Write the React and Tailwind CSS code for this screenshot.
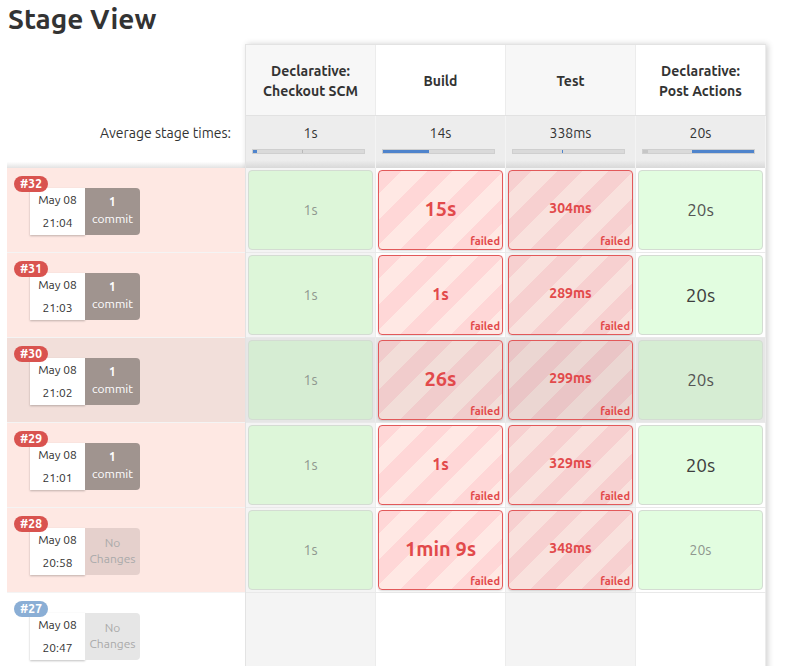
import React from "react";

const rows = [
  {
    id: 32, date: "May 08", time: "21:04", commits: "1", state: "failed",
    cells: [
      { t: "1s", ok: true, size: "small" },
      { t: "15s", ok: false, size: "big" },
      { t: "304ms", ok: false, size: "small" },
      { t: "20s", ok: true, size: "large" },
    ],
  },
  {
    id: 31, date: "May 08", time: "21:03", commits: "1", state: "failed",
    cells: [
      { t: "1s", ok: true, size: "small" },
      { t: "1s", ok: false, size: "mid" },
      { t: "289ms", ok: false, size: "small" },
      { t: "20s", ok: true, size: "xlarge" },
    ],
  },
  {
    id: 30, date: "May 08", time: "21:02", commits: "1", state: "hover",
    cells: [
      { t: "1s", ok: true, size: "small" },
      { t: "26s", ok: false, size: "big" },
      { t: "299ms", ok: false, size: "small" },
      { t: "20s", ok: true, size: "large" },
    ],
  },
  {
    id: 29, date: "May 08", time: "21:01", commits: "1", state: "failed",
    cells: [
      { t: "1s", ok: true, size: "small" },
      { t: "1s", ok: false, size: "mid" },
      { t: "329ms", ok: false, size: "small" },
      { t: "20s", ok: true, size: "xlarge" },
    ],
  },
  {
    id: 28, date: "May 08", time: "20:58", commits: null, state: "failed",
    cells: [
      { t: "1s", ok: true, size: "small" },
      { t: "1min 9s", ok: false, size: "big" },
      { t: "348ms", ok: false, size: "small" },
      { t: "20s", ok: true, size: "small" },
    ],
  },
  { id: 27, date: "May 08", time: "20:47", commits: null, state: "running", cells: null },
];

const stages = [
  { name: ["Declarative:", "Checkout SCM"], avg: "1s" },
  { name: ["Build"], avg: "14s" },
  { name: ["Test"], avg: "338ms" },
  { name: ["Declarative:", "Post Actions"], avg: "20s" },
];

const okText = {
  small: "text-[14px] text-[#8f978f]",
  large: "text-[17px] text-[#555]",
  xlarge: "text-[19px] text-[#3f3f3f]",
};

const failText = {
  small: "text-[14px]",
  mid: "text-[16px]",
  big: "text-[20px]",
};

// stripe backgrounds, odd column sits on grey so it's a touch darker
const stripes = {
  normal: [
    "bg-[image:repeating-linear-gradient(-45deg,#ffe8e4_0px,#ffe8e4_18px,#ffd7d7_18px,#ffd7d7_36px)]",
    "bg-[image:repeating-linear-gradient(-45deg,#f9e1dd_0px,#f9e1dd_18px,#f7d0d0_18px,#f7d0d0_36px)]",
  ],
  hover: [
    "bg-[image:repeating-linear-gradient(-45deg,#f2ddd8_0px,#f2ddd8_18px,#f1cccc_18px,#f1cccc_36px)]",
    "bg-[image:repeating-linear-gradient(-45deg,#ebd6d2_0px,#ebd6d2_18px,#eac5c6_18px,#eac5c6_36px)]",
  ],
};

function Bar({ i }) {
  return (
    <div className="relative ml-[6px] h-[5px] w-[113px] border border-[#cfcfcf] bg-[#dadada]">
      {i === 0 && (
        <>
          <div className="absolute left-0 top-0 h-full w-[4px] bg-[#4f84cc]" />
          <div className="absolute left-[49px] top-0 h-full w-px bg-[#b9b9b9]" />
        </>
      )}
      {i === 1 && <div className="absolute left-0 top-0 h-full w-[46px] bg-[#4f84cc]" />}
      {i === 2 && <div className="absolute left-[49px] top-0 h-full w-px bg-[#4f84cc]" />}
      {i === 3 && (
        <>
          <div className="absolute left-0 top-0 h-full w-[5px] bg-[#c6c6c6]" />
          <div className="absolute left-[49px] right-0 top-0 h-full bg-[#4f84cc]" />
        </>
      )}
    </div>
  );
}

function BuildInfo({ row }) {
  const bg =
    row.state === "running" ? "bg-white" : row.state === "hover" ? "bg-[#f2dfda]" : "bg-[#fee8e3]";
  const badge = row.state === "running" ? "bg-[#8aaed5]" : "bg-[#d9534f]";
  return (
    <div className={`relative h-[85px] border-b border-[#f4f4f4] ${bg}`}>
      <span
        className={`absolute left-[7px] top-[8px] z-10 flex h-[16px] w-[34px] items-center justify-center rounded-full text-[12px] font-bold text-white ${badge}`}
      >
        #{row.id}
      </span>
      <div className="flex pl-[23px] pt-[20px]">
        <div className="flex h-[47px] w-[55px] flex-col items-center justify-center gap-[7px] bg-white text-[12px] leading-[16px] text-[#333] shadow-[0_1px_2px_rgba(0,0,0,0.25)]">
          <span>{row.date}</span>
          <span>{row.time}</span>
        </div>
        {row.commits ? (
          <div className="flex h-[47px] w-[55px] flex-col items-center justify-center rounded-r-[4px] bg-[#a0948f] pb-[3px] text-[12px] leading-[17px] text-white">
            <span className="font-bold">{row.commits}</span>
            <span>commit</span>
          </div>
        ) : (
          <div
            className={`flex h-[47px] w-[55px] flex-col items-center justify-center rounded-r-[4px] pb-[2px] text-[12px] leading-[16px] text-[#aaa] ${
              row.state === "running" ? "bg-[#e6e6e6]" : "bg-[#e5d0cc]"
            }`}
          >
            <span>No</span>
            <span>Changes</span>
          </div>
        )}
      </div>
    </div>
  );
}

function StageCell({ cell, col, hover }) {
  if (cell.ok) {
    const g = hover ? "bg-[#d6edd3]" : col === 0 ? "bg-[#ddf6d9]" : "bg-[#e2fde0]";
    return (
      <div className={`flex h-[80px] items-center justify-center rounded-[4px] border border-[#d4dcd3] ${g}`}>
        <span className={okText[cell.size]}>{cell.t}</span>
      </div>
    );
  }
  const s = stripes[hover ? "hover" : "normal"][col === 2 ? 1 : 0];
  return (
    <div
      className={`relative flex h-[80px] items-center justify-center rounded-[4px] border border-[#e2595a] pb-[3px] font-bold text-[#e24a4b] shadow-[0_1px_2px_rgba(0,0,0,0.15)] ${s}`}
    >
      <span className={failText[cell.size]}>{cell.t}</span>
      <span className="absolute bottom-[1px] right-[2px] text-[11px] leading-[14px]">failed</span>
    </div>
  );
}

export default function App() {
  return (
    <div className="min-h-screen bg-white font-['Ubuntu','Lato','Noto_Sans',sans-serif] text-[#333]">
      <h2 className="px-[8px] text-[28px] font-bold leading-[38px] text-[#333]">Stage View</h2>

      <div className="ml-[7px] mt-[6px] flex items-start">
        {/* left column: labels + build info */}
        <div className="w-[238px]">
          <div className="h-[71px]" />
          <div className="flex h-[53px] flex-col bg-[linear-gradient(to_bottom,#ffffff_88%,#e3e3e3)]">
            <div className="flex h-[36px] items-center justify-end pr-[14px] text-[14px]">
              Average stage times:
            </div>
          </div>
          {rows.map((r) => (
            <BuildInfo key={r.id} row={r} />
          ))}
        </div>

        {/* stage table */}
        <div className="border-l border-t border-[#e3e3e3] shadow-[2px_0_6px_rgba(0,0,0,0.18)]">
          <div className="flex h-[70px]">
            {stages.map((s, i) => (
              <div
                key={i}
                className={`flex w-[130px] flex-col items-center justify-center border-r border-[#ececec] pt-[2px] text-[14px] font-bold leading-[20px] ${
                  i % 2 === 0 ? "bg-[#f7f7f7]" : "bg-white"
                }`}
              >
                {s.name.map((n) => (
                  <span key={n}>{n}</span>
                ))}
              </div>
            ))}
          </div>
          <div className="flex h-[53px] border-t border-[#e2e2e2] bg-[linear-gradient(to_bottom,#ededed_85%,#d9d9d9)]">
            {stages.map((s, i) => (
              <div key={i} className="w-[130px] border-r border-[#f4f4f4]">
                <div className="flex h-[33px] items-center justify-center pt-[2px] text-[14px]">{s.avg}</div>
                <Bar i={i} />
              </div>
            ))}
          </div>
          {rows.map((r) => (
            <div key={r.id} className="flex h-[85px] border-b border-[#e9e9e9]">
              {stages.map((s, i) => (
                <div
                  key={i}
                  className={`w-[130px] border-r border-[#ececec] px-[2px] pt-[2px] ${
                    r.state === "hover" ? "bg-[#e6e6e6]" : i % 2 === 0 ? "bg-[#f4f4f4]" : "bg-white"
                  }`}
                >
                  {r.cells && <StageCell cell={r.cells[i]} col={i} hover={r.state === "hover"} />}
                </div>
              ))}
            </div>
          ))}
        </div>
      </div>
    </div>
  );
}
